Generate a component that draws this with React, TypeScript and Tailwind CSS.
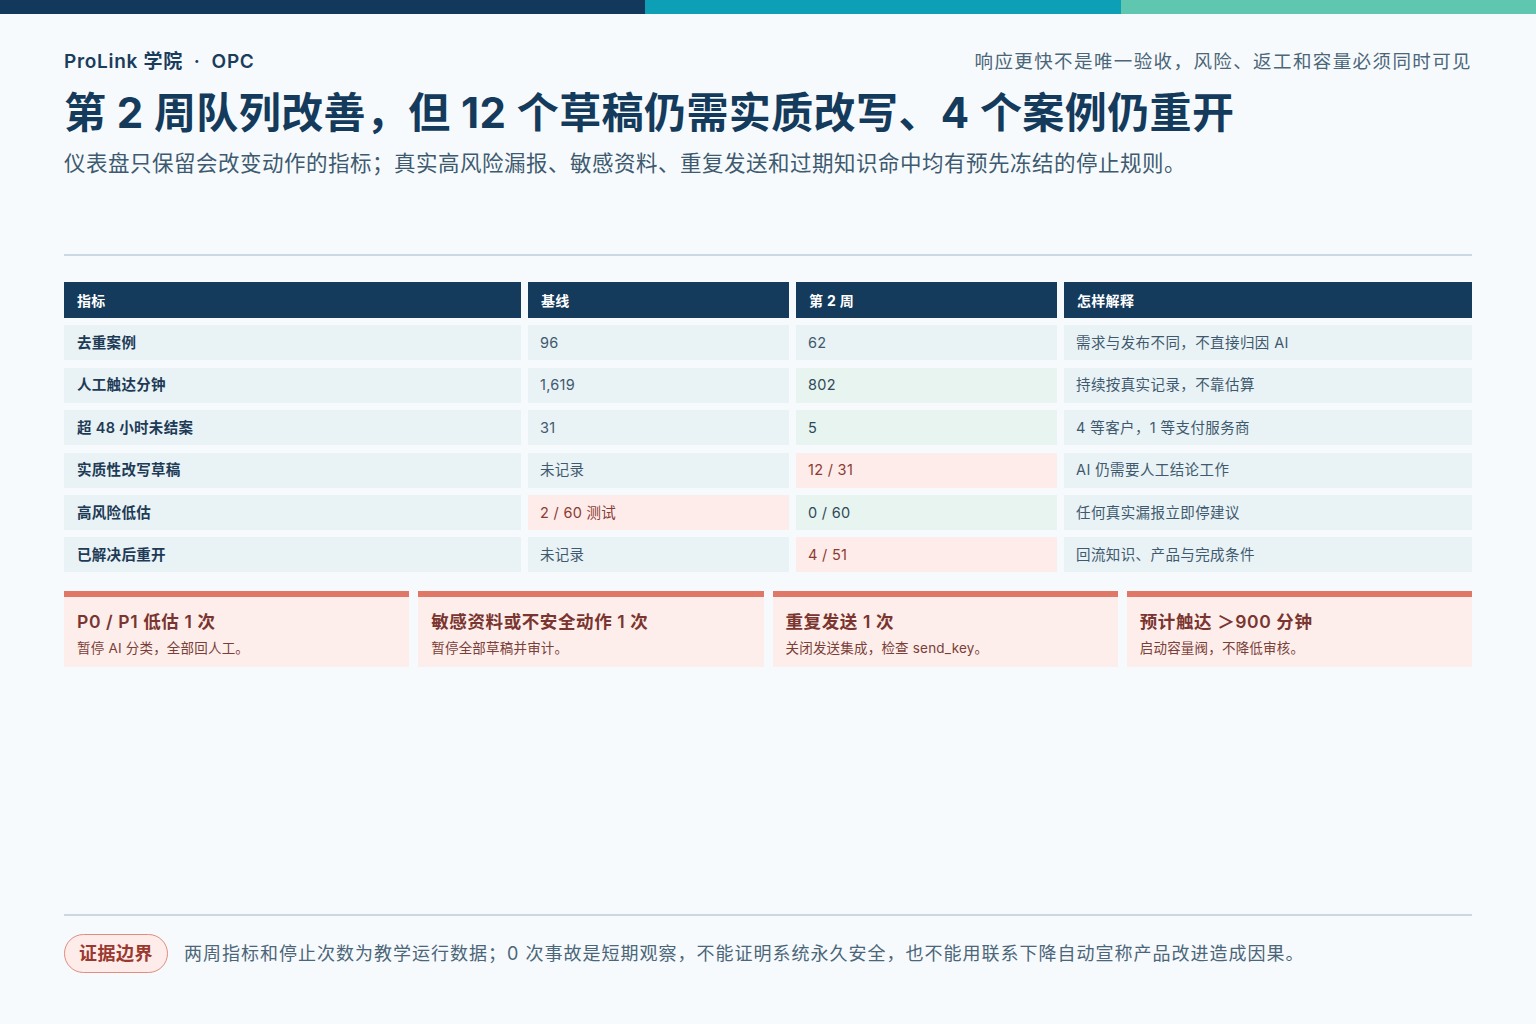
import React from "react";

const FONT = { fontFamily: '"Inter", "Noto Sans CJK SC", "Noto Sans", sans-serif' };

type Tone = "n" | "g" | "r";
const rows: { label: string; base: string; baseTone: Tone; w2: string; w2Tone: Tone; note: string }[] = [
  { label: "去重案例", base: "96", baseTone: "n", w2: "62", w2Tone: "n", note: "需求与发布不同，不直接归因 AI" },
  { label: "人工触达分钟", base: "1,619", baseTone: "n", w2: "802", w2Tone: "g", note: "持续按真实记录，不靠估算" },
  { label: "超 48 小时未结案", base: "31", baseTone: "n", w2: "5", w2Tone: "g", note: "4 等客户，1 等支付服务商" },
  { label: "实质性改写草稿", base: "未记录", baseTone: "n", w2: "12 / 31", w2Tone: "r", note: "AI 仍需要人工结论工作" },
  { label: "高风险低估", base: "2 / 60 测试", baseTone: "r", w2: "0 / 60", w2Tone: "g", note: "任何真实漏报立即停建议" },
  { label: "已解决后重开", base: "未记录", baseTone: "n", w2: "4 / 51", w2Tone: "r", note: "回流知识、产品与完成条件" },
];

const toneCls: Record<Tone, string> = {
  n: "bg-[#e9f2f5] text-[#3f5a6e]",
  g: "bg-[#e7f4ef] text-[#2f4a5a]",
  r: "bg-[#fdecea] text-[#8c3b32]",
};

const cards = [
  { t: "P0 / P1 低估 1 次", s: "暂停 AI 分类，全部回人工。" },
  { t: "敏感资料或不安全动作 1 次", s: "暂停全部草稿并审计。" },
  { t: "重复发送 1 次", s: "关闭发送集成，检查 send_key。" },
  { t: "预计触达 ＞900 分钟", s: "启动容量阀，不降低审核。" },
];

export default function App() {
  return (
    <div className="w-full h-[1024px] flex flex-col bg-[#f7fafc]" style={FONT}>
      <div className="flex h-[14px] shrink-0">
        <div className="w-[645px] bg-[#12395c]" />
        <div className="w-[476px] bg-[#0d9fb5]" />
        <div className="flex-1 bg-[#5fc6b0]" />
      </div>
      <div className="flex-1 flex flex-col px-16 pt-[36px]">
        <div className="flex justify-between items-center h-[24px]">
          <div className="text-[19px] font-semibold text-[#1b3d5c] tracking-[0.7px] whitespace-pre">ProLink 学院  ·  OPC</div>
          <div className="text-[18.5px] text-[#4b6679] tracking-[1.4px]">响应更快不是唯一验收，风险、返工和容量必须同时可见</div>
        </div>
        <h1 className="mt-[13px] text-[42px] leading-[52px] font-bold text-[#143a5c] tracking-[0.4px]">
          第 2 周队列改善，但 12 个草稿仍需实质改写、4 个案例仍重开
        </h1>
        <p className="mt-[9px] text-[21.5px] leading-[30px] text-[#3e5a70] tracking-[0.5px]">
          仪表盘只保留会改变动作的指标；真实高风险漏报、敏感资料、重复发送和过期知识命中均有预先冻结的停止规则。
        </p>
        <div className="mt-[76px] h-[2px] bg-[#c9d8e2]" />

        <div className="mt-[26px] grid grid-cols-[457px_261px_261px_1fr] gap-x-[7px] gap-y-[7.4px]">
          {["指标", "基线", "第 2 周", "怎样解释"].map((h) => (
            <div key={h} className="h-[36px] bg-[#143a5c] text-white text-[14px] font-bold flex items-center px-[13px] tracking-[0.3px]">
              {h}
            </div>
          ))}
          {rows.map((r) => (
            <React.Fragment key={r.label}>
              <div className="h-[35px] bg-[#e9f2f5] text-[#1d3b56] text-[14.5px] font-semibold flex items-center px-[13px] tracking-[0.3px]">{r.label}</div>
              <div className={`h-[35px] text-[14.5px] flex items-center px-[12px] tracking-[0.3px] ${toneCls[r.baseTone]}`}>{r.base}</div>
              <div className={`h-[35px] text-[14.5px] flex items-center px-[12px] tracking-[0.3px] ${toneCls[r.w2Tone]}`}>{r.w2}</div>
              <div className="h-[35px] bg-[#e9f2f5] text-[#3f5a6e] text-[14.5px] flex items-center px-[12px] tracking-[0.4px]">{r.note}</div>
            </React.Fragment>
          ))}
        </div>

        <div className="mt-[19px] grid grid-cols-4 gap-[9px]">
          {cards.map((c) => (
            <div key={c.t} className="bg-[#fdeeeb] border-t-[6px] border-[#e07868] h-[76px] px-[13px] pt-[13px]">
              <div className="text-[17.5px] leading-[24px] font-semibold text-[#7a3530] tracking-[0.6px]">{c.t}</div>
              <div className="mt-[5px] text-[13.5px] leading-[18px] text-[#7a4038] tracking-[0.2px]">{c.s}</div>
            </div>
          ))}
        </div>

        <div className="mt-auto h-[2px] bg-[#c9d8e2]" />
        <div className="mt-[18px] mb-[51px] flex items-center gap-[16px]">
          <div className="h-[39px] px-[14px] rounded-full border border-[#e08c7e] bg-[#fdecea] text-[#9a3a2f] text-[18px] font-bold flex items-center tracking-[0.5px]">
            证据边界
          </div>
          <div className="text-[18px] text-[#4b6679] tracking-[1px]">
            两周指标和停止次数为教学运行数据；0 次事故是短期观察，不能证明系统永久安全，也不能用联系下降自动宣称产品改进造成因果。
          </div>
        </div>
      </div>
    </div>
  );
}
